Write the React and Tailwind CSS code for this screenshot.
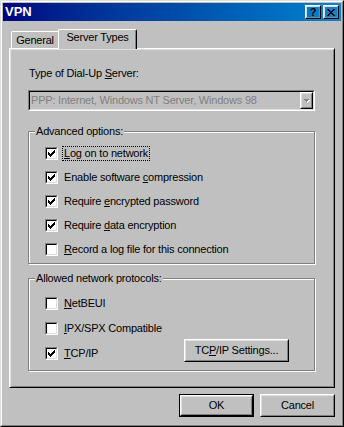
import React from "react";

const FONT = "font-['Liberation_Sans',Arial,sans-serif]";

const CheckMark = () => (
  <svg width="7" height="7" viewBox="0 0 7 7" shapeRendering="crispEdges" className="absolute left-[1px] top-[1px]">
    {[2, 3, 4, 3, 2, 1, 0].map((s, i) => (
      <rect key={i} x={i} y={s} width="1" height="3" fill="#000" />
    ))}
  </svg>
);

const Box = ({ on }) => (
  <span className="block w-[13px] h-[13px] shrink-0 border border-t-[#808080] border-l-[#808080] border-r-white border-b-white">
    <span className="relative block w-[11px] h-[11px] bg-white border border-t-black border-l-black border-r-[#dfdfdf] border-b-[#dfdfdf]">
      {on && <CheckMark />}
    </span>
  </span>
);

const Option = ({ on, focus, children }) => (
  <div className="flex items-center h-[13px]">
    <Box on={on} />
    <span
      className={`ml-[4px] px-[1px] leading-[13px] border ${focus ? "border-dotted border-black" : "border-transparent"}`}
    >
      {children}
    </span>
  </div>
);

const Raised = ({ className, children }) => (
  <div className={`border border-t-white border-l-white border-r-black border-b-black ${className}`}>
    <div className="h-full border border-t-[#dfdfdf] border-l-[#dfdfdf] border-r-[#808080] border-b-[#808080] flex items-center justify-center">
      {children}
    </div>
  </div>
);

const Group = ({ label, className, children }) => (
  <div className={`relative border border-[#808080] shadow-[inset_1px_1px_#fff,1px_1px_#fff] ${className}`}>
    <span className="absolute -top-[7px] left-[6px] px-[1px] bg-[#c0c0c0] leading-[13px]">{label}</span>
    {children}
  </div>
);

const CloseGlyph = () => {
  const rows = [[0, 1, 6, 7], [1, 2, 5, 6], [2, 3, 4, 5], [3, 4], [2, 3, 4, 5], [1, 2, 5, 6], [0, 1, 6, 7]];
  return (
    <svg width="8" height="7" viewBox="0 0 8 7" shapeRendering="crispEdges">
      {rows.map((r, y) => r.map((x) => <rect key={`${x}-${y}`} x={x} y={y} width="1" height="1" fill="#000" />))}
    </svg>
  );
};

const TitleBar = () => (
  <div className="h-[18px] flex items-center justify-between pl-[2px] pr-[2px] bg-linear-to-r from-[#000080] to-[#1084d0]">
    <span className="text-white font-bold text-[13px] tracking-[0px] leading-[18px]">VPN</span>
    <div className="flex gap-[2px]">
      <Raised className="w-[16px] h-[14px]">
        <span className="font-bold text-[11px] leading-[10px]">?</span>
      </Raised>
      <Raised className="w-[16px] h-[14px]">
        <CloseGlyph />
      </Raised>
    </div>
  </div>
);

const Tabs = () => (
  <div className="flex items-end h-[19px] pl-[2px]">
    <div className="w-[47px] h-[17px] pt-[2px] text-center leading-[13px] border-l border-t border-white rounded-tl-[2px]">
      General
    </div>
    <div className="relative z-10 w-[79px] h-[20px] -mb-px pt-[1px] text-center leading-[13px] bg-[#c0c0c0] border-l border-t border-r border-l-white border-t-white border-r-black rounded-t-[2px] shadow-[inset_-1px_0_#808080]">
      Server Types
    </div>
  </div>
);

const Combo = () => (
  <div className="mt-[10px] h-[21px] border border-t-[#808080] border-l-[#808080] border-r-white border-b-white">
    <div className="h-full flex border border-t-black border-l-black border-r-[#dfdfdf] border-b-[#dfdfdf]">
      <span className="flex-1 pl-[1px] leading-[17px] text-[#808080]">
        PPP: Internet, Windows NT Server, Windows 98
      </span>
      <Raised className="w-[13px] h-[17px]">
        <svg width="6" height="4" viewBox="0 0 6 4" shapeRendering="crispEdges">
          <path d="M1 1h5v1h-1v1h-1v1h-1z" fill="#fff" />
          <path d="M0 0h5v1h-1v1h-1v1h-1v-1h-1v-1h-1z" fill="#808080" />
        </svg>
      </Raised>
    </div>
  </div>
);

export default function App() {
  return (
    <div
      className={`w-[344px] h-[427px] bg-[#c0c0c0] text-[11px] tracking-[-0.2px] text-black ${FONT} border border-t-[#dfdfdf] border-l-[#dfdfdf] border-r-black border-b-black`}
    >
      <div className="h-full p-[1px] border border-t-white border-l-white border-r-[#808080] border-b-[#808080]">
        <TitleBar />
        <div className="px-[6px] pt-[8px]">
          <Tabs />
          <div className="h-[340px] pl-[18px] border border-l-white border-t-white border-r-black border-b-black shadow-[inset_1px_1px_#dfdfdf,inset_-1px_-1px_#808080]">
            <div className="w-[287px]">
              <div className="mt-[18px] ml-[1px] leading-[13px]">
                Type of Dial-Up <u>S</u>erver:
              </div>
              <Combo />
              <Group label="Advanced options:" className="mt-[20px] h-[133px] pt-[15px] pl-[16px]">
                <div className="flex flex-col gap-[11px]">
                  <Option on focus>
                    <u>L</u>og on to network
                  </Option>
                  <Option on>
                    Enable software <u>c</u>ompression
                  </Option>
                  <Option on>
                    Require <u>e</u>ncrypted password
                  </Option>
                  <Option on>
                    Require <u>d</u>ata encryption
                  </Option>
                  <Option>
                    <u>R</u>ecord a log file for this connection
                  </Option>
                </div>
              </Group>
              <Group label="Allowed network protocols:" className="mt-[14px] h-[93px] pt-[18px] pl-[16px]">
                <div className="flex flex-col">
                  <Option>
                    <u>N</u>etBEUI
                  </Option>
                  <div className="mt-[12px]">
                    <Option>
                      <u>I</u>PX/SPX Compatible
                    </Option>
                  </div>
                  <div className="mt-[4px] flex items-start">
                    <div className="mt-[8px]">
                      <Option on>
                        <u>T</u>CP/IP
                      </Option>
                    </div>
                    <Raised className="ml-auto mr-[25px] w-[105px] h-[23px]">
                      TC<u>P</u>/IP Settings...
                    </Raised>
                  </div>
                </div>
              </Group>
            </div>
          </div>
        </div>
        <div className="mt-[6px] flex justify-end gap-[6px] pr-[6px]">
          <div className="w-[75px] h-[23px] border border-black">
            <Raised className="h-full">OK</Raised>
          </div>
          <Raised className="w-[75px] h-[23px]">Cancel</Raised>
        </div>
      </div>
    </div>
  );
}
